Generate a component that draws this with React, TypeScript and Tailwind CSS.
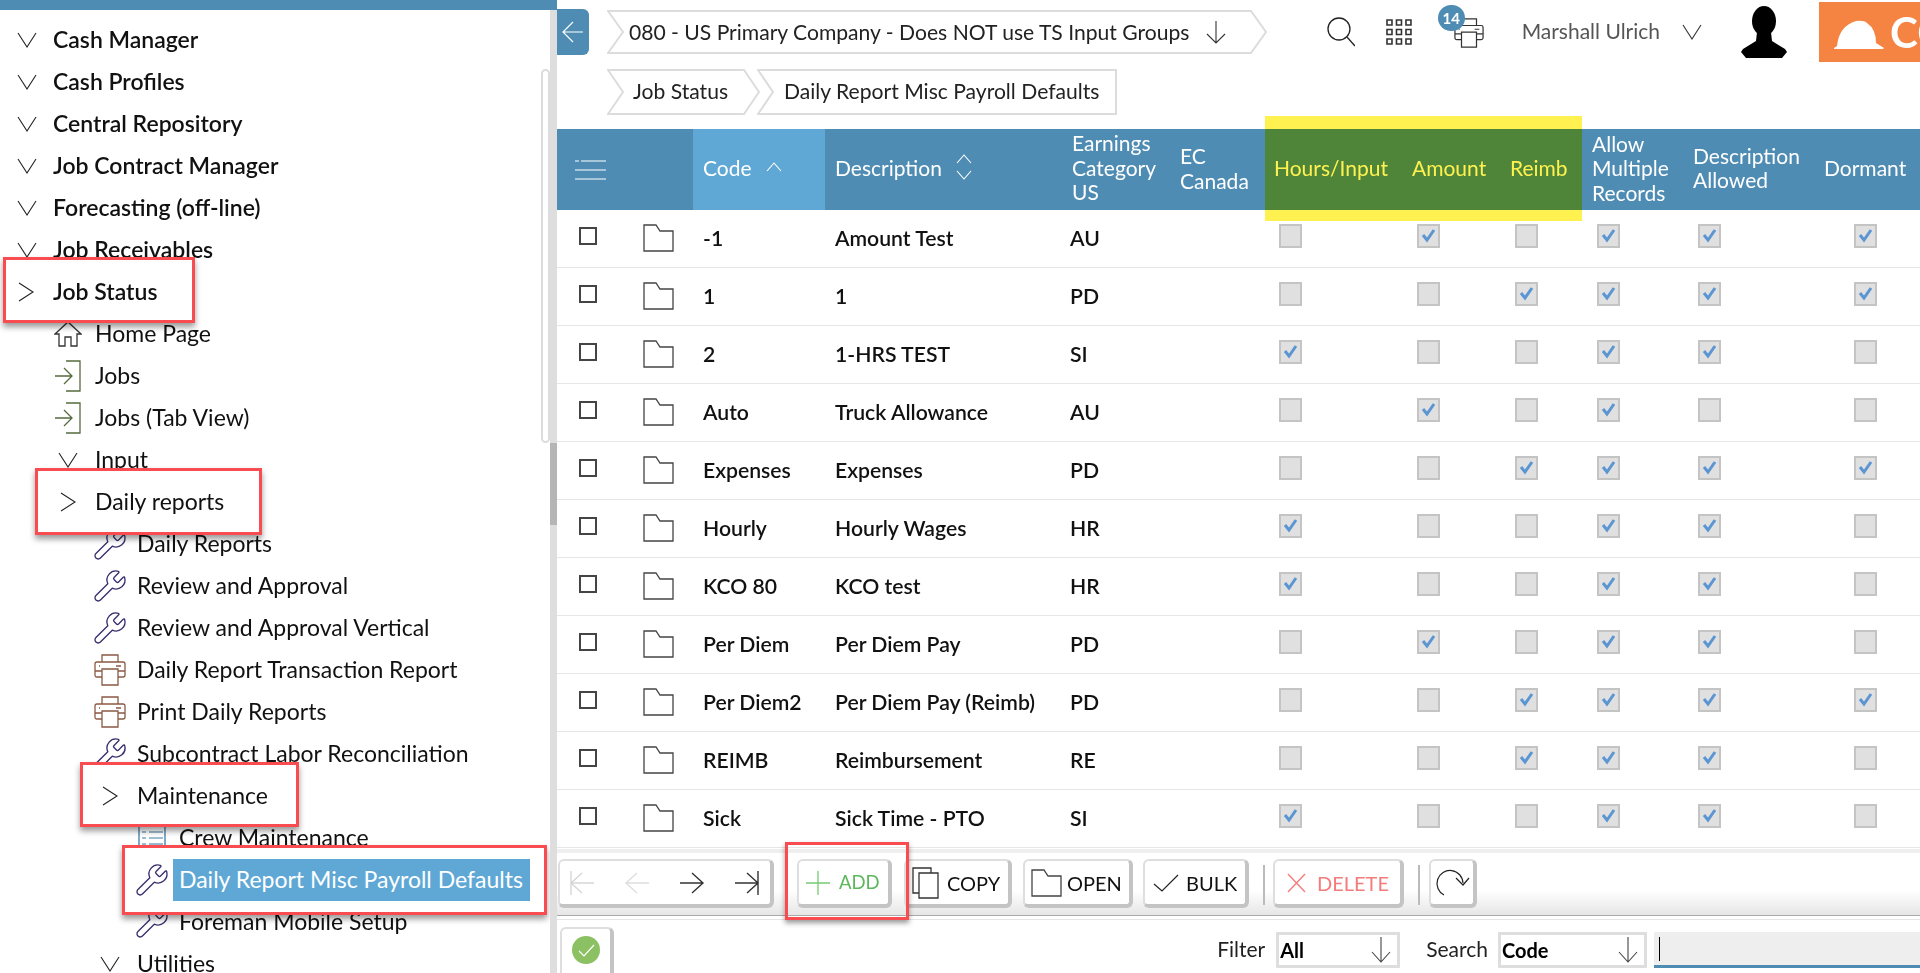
import { ReactNode } from "react";
import { Wrench } from "lucide-react";

const ChevronOpen = ({ className = "" }: { className?: string }) => (
    <svg width="20" height="16" viewBox="0 0 20 16" fill="none" stroke="#222" strokeWidth="1.1" className={className}>
        <path d="M1 1 L10 15 L19 1" />
    </svg>
);

const ChevronClosed = ({ className = "" }: { className?: string }) => (
    <svg width="20" height="20" viewBox="0 0 20 20" fill="none" stroke="#222" strokeWidth="1.1" className={className}>
        <path d="M3 1 L17 10 L3 19" />
    </svg>
);

const HomeIcon = () => (
    <svg width="28" height="26" viewBox="0 0 28 26" fill="none" stroke="#333" strokeWidth="1.3">
        <path d="M1 13 L14 1 L27 13 L23 13 L23 25 L17 25 L17 16 L11 16 L11 25 L5 25 L5 13 Z" />
    </svg>
);

const JobsIcon = () => (
    <svg width="28" height="32" viewBox="0 0 28 32" fill="none" stroke="#566b3f" strokeWidth="1.3">
        <path d="M12 1 H26 V31 H12" />
        <path d="M1 16 H18 M10 8 L18 16 L10 24" />
    </svg>
);

const PrinterIcon = ({ color = "#8a5a44", size = 32 }: { color?: string; size?: number }) => (
    <svg width={size} height={size} viewBox="0 0 32 32" fill="none" stroke={color} strokeWidth="1.3">
        <path d="M8 8 V1 H24 V8" />
        <path d="M8 23 H3 Q1 23 1 21 V10 Q1 8 3 8 H29 Q31 8 31 10 V21 Q31 23 29 23 H24" />
        <path d="M8 15 H24 V31 H8 Z" />
        <path d="M5 12 H6 M22 12 H27" />
        <path d="M1 17 H8 M24 17 H31" />
    </svg>
);

const CrewIcon = () => (
    <svg width="28" height="26" viewBox="0 0 28 26" fill="none" stroke="#3c7ca6" strokeWidth="1.3">
        <path d="M1 1 H27 V25 H1 Z" />
        <path d="M4 7 H8 M11 7 H25 M4 13 H8 M11 13 H25 M4 19 H8 M11 19 H25" strokeWidth="1.1" />
    </svg>
);

const WrenchIcon = () => <Wrench size={36} strokeWidth={0.9} color="#3a2f6e" />;

const FolderIcon = ({ className = "" }: { className?: string }) => (
    <svg width="31" height="28" viewBox="0 0 31 28" fill="white" stroke="#444" strokeWidth="1.3" className={className}>
        <path d="M1 1 H13 L17 7 H30 V27 H1 Z" />
    </svg>
);

const CopyIcon = () => (
    <svg width="27" height="32" viewBox="0 0 27 32" fill="white" stroke="#333" strokeWidth="1.3">
        <path d="M1 1 H19 V26 H1 Z" />
        <path d="M7 6 H26 V31 H7 Z" />
    </svg>
);

const Burger = () => (
    <svg width="31" height="20" viewBox="0 0 31 20" fill="none" stroke="white" strokeWidth="1.2">
        <path d="M0 1 H4 M6 1 H31 M0 10 H31 M0 19 H31" />
    </svg>
);

const Avatar = () => (
    <svg width="46" height="52" viewBox="0 0 46 52" fill="black">
        <ellipse cx="23" cy="15" rx="12" ry="15" />
        <path d="M16 26 H30 L31 35 L44 43 L46 46 L41 52 H5 L0 46 L2 43 L15 35 Z" />
    </svg>
);

const HardHat = () => (
    <svg width="50" height="30" viewBox="0 0 50 30" fill="white">
        <path d="M0 28 L3 26 Q5 6 22 1 Q30 0 33 3 Q42 9 42 23 L50 28 L49 29 H0 Z" />
    </svg>
);

type Row = { label: string; slot: string; pad: string; icon: ReactNode; head?: boolean; box?: string; selected?: boolean };

const open0 = <ChevronOpen className="ml-[1px]" />;
const wrench2 = <WrenchIcon />;

const treeRows: Row[] = [
    { label: "Cash Manager", pad: "pl-[16px]", slot: "w-[37px]", icon: open0, head: true },
    { label: "Cash Profiles", pad: "pl-[16px]", slot: "w-[37px]", icon: open0, head: true },
    { label: "Central Repository", pad: "pl-[16px]", slot: "w-[37px]", icon: open0, head: true },
    { label: "Job Contract Manager", pad: "pl-[16px]", slot: "w-[37px]", icon: open0, head: true },
    { label: "Forecasting (off-line)", pad: "pl-[16px]", slot: "w-[37px]", icon: open0, head: true },
    { label: "Job Receivables", pad: "pl-[16px]", slot: "w-[37px]", icon: open0, head: true },
    {
        label: "Job Status", pad: "pl-[16px]", slot: "w-[37px]", icon: <ChevronClosed />, head: true,
        box: "left-[3px] top-[-14px] w-[192px] h-[66px]",
    },
    { label: "Home Page", pad: "pl-[54px]", slot: "w-[41px]", icon: <HomeIcon /> },
    { label: "Jobs", pad: "pl-[54px]", slot: "w-[41px]", icon: <JobsIcon /> },
    { label: "Jobs (Tab View)", pad: "pl-[54px]", slot: "w-[41px]", icon: <JobsIcon /> },
    { label: "Input", pad: "pl-[54px]", slot: "w-[41px]", icon: <ChevronOpen className="ml-[4px]" /> },
    {
        label: "Daily reports", pad: "pl-[54px]", slot: "w-[41px]", icon: <ChevronClosed className="ml-[4px]" />,
        box: "left-[35px] top-[-13px] w-[227px] h-[67px]",
    },
    { label: "Daily Reports", pad: "pl-[92px]", slot: "w-[45px]", icon: wrench2 },
    { label: "Review and Approval", pad: "pl-[92px]", slot: "w-[45px]", icon: wrench2 },
    { label: "Review and Approval Vertical", pad: "pl-[92px]", slot: "w-[45px]", icon: wrench2 },
    { label: "Daily Report Transaction Report", pad: "pl-[94px]", slot: "w-[43px]", icon: <PrinterIcon /> },
    { label: "Print Daily Reports", pad: "pl-[94px]", slot: "w-[43px]", icon: <PrinterIcon /> },
    { label: "Subcontract Labor Reconciliation", pad: "pl-[92px]", slot: "w-[45px]", icon: wrench2 },
    {
        label: "Maintenance", pad: "pl-[94px]", slot: "w-[43px]", icon: <ChevronClosed className="ml-[6px]" />,
        box: "left-[80px] top-[-13px] w-[219px] h-[65px]",
    },
    { label: "Crew Maintenance", pad: "pl-[138px]", slot: "w-[41px]", icon: <CrewIcon /> },
    {
        label: "Daily Report Misc Payroll Defaults", pad: "pl-[134px]", slot: "w-[45px]", icon: wrench2, selected: true,
        box: "left-[122px] top-[-14px] w-[425px] h-[70px]",
    },
    { label: "Foreman Mobile Setup", pad: "pl-[134px]", slot: "w-[45px]", icon: wrench2 },
    { label: "Utilities", pad: "pl-[94px]", slot: "w-[43px]", icon: <ChevronOpen className="ml-[6px]" /> },
];

const TreeRow = ({ row }: { row: Row }) => (
    <div className={`relative flex h-[42px] shrink-0 items-center text-[23px] text-[#111] ${row.pad} ${row.head ? "font-semibold" : ""}`}>
        {row.box && <div className={`absolute z-10 border-[3px] border-[#f84c50] bg-white shadow-[0_4px_6px_rgba(0,0,0,0.4)] ${row.box}`} />}
        <div className={`flex shrink-0 items-center ${row.slot} ${row.box ? "relative z-20" : ""}`}>{row.icon}</div>
        <span className={`whitespace-nowrap pb-[2px] ${row.box ? "relative z-20" : ""} ${row.selected ? "-ml-[6px] flex h-[42px] w-[357px] items-center bg-[#5fa8d6] px-[6px] text-white" : ""}`}>
            {row.label}
        </span>
    </div>
);

const grid = "grid grid-cols-[68px_68px_132px_238px_108px_94px_135px_100px_82px_101px_132px_103px]";

const tableRows: { code: string; desc: string; cat: string; checks: boolean[] }[] = [
    { code: "-1", desc: "Amount Test", cat: "AU", checks: [false, true, false, true, true, true] },
    { code: "1", desc: "1", cat: "PD", checks: [false, false, true, true, true, true] },
    { code: "2", desc: "1-HRS TEST", cat: "SI", checks: [true, false, false, true, true, false] },
    { code: "Auto", desc: "Truck Allowance", cat: "AU", checks: [false, true, false, true, false, false] },
    { code: "Expenses", desc: "Expenses", cat: "PD", checks: [false, false, true, true, true, true] },
    { code: "Hourly", desc: "Hourly Wages", cat: "HR", checks: [true, false, false, true, true, false] },
    { code: "KCO 80", desc: "KCO test", cat: "HR", checks: [true, false, false, true, true, false] },
    { code: "Per Diem", desc: "Per Diem Pay", cat: "PD", checks: [false, true, false, true, true, false] },
    { code: "Per Diem2", desc: "Per Diem Pay (Reimb)", cat: "PD", checks: [false, false, true, true, true, true] },
    { code: "REIMB", desc: "Reimbursement", cat: "RE", checks: [false, false, true, true, true, false] },
    { code: "Sick", desc: "Sick Time - PTO", cat: "SI", checks: [true, false, false, true, true, false] },
];

const checkPads = ["pl-[14px]", "pl-[17px]", "pl-[15px]", "pl-[15px]", "pl-[15px]", "pl-[39px]"];

const GreyCheck = ({ on }: { on: boolean }) => (
    <div className="mb-[6px] flex h-[24px] w-[23px] items-center justify-center border-2 border-[#c4c4c4] bg-[#e0e0e0]">
        {on && (
            <svg width="15" height="15" viewBox="0 0 15 15" fill="none" stroke="#5b96d2" strokeWidth="3">
                <path d="M2 7 L6 12 L13 2" />
            </svg>
        )}
    </div>
);

const Crumb = ({ w, h, square, children, className = "" }: { w: number; h: number; square?: boolean; children: ReactNode; className?: string }) => (
    <div className={`relative flex items-center ${className}`} style={{ width: w, height: h }}>
        <svg width={w} height={h} className="absolute inset-0" fill="white" stroke="#dcdcdc" strokeWidth="2">
            <path d={square
                ? `M1 1 H${w - 1} V${h - 1} H1 L16 ${h / 2} Z`
                : `M1 1 H${w - 16} L${w - 1} ${h / 2} L${w - 16} ${h - 1} H1 L16 ${h / 2} Z`} />
        </svg>
        <div className="relative flex items-center whitespace-nowrap text-[21.100px] text-[#222]">{children}</div>
    </div>
);

const ToolButton = ({ className, children }: { className: string; children: ReactNode }) => (
    <div className={`flex h-[49px] shrink-0 items-center rounded-md border-2 border-r-4 border-b-4 border-[#dedede] border-r-[#c4c4c4] border-b-[#c4c4c4] bg-white text-[20px] ${className}`}>
        {children}
    </div>
);

const PagerArrow = ({ d, color }: { d: string; color: string }) => (
    <svg width="26" height="30" viewBox="0 0 26 30" fill="none" stroke={color} strokeWidth="1.4">
        <path d={d} />
    </svg>
);

const SelectBox = ({ label, className }: { label: string; className: string }) => (
    <div className={`flex h-[36px] items-center justify-between border-[3px] border-[#dedede] pl-[1px] pr-[6px] text-[20px] font-bold text-black ${className}`}>
        {label}
        <svg width="20" height="28" viewBox="0 0 20 28" fill="none" stroke="#444" strokeWidth="1.1">
            <path d="M10 1 V26 M1 16 L10 26 L19 16" />
        </svg>
    </div>
);

const App = () => {
    return (
        <div className="flex h-[973px] w-[1920px] overflow-hidden bg-white font-['Lato',sans-serif]">
            {/* menu tree */}
            <aside className="relative flex h-full w-[550px] shrink-0 flex-col overflow-hidden">
                <div className="h-[10px] w-full shrink-0 bg-[#4f8cb3]" />
                <div className="flex flex-col pt-[9px]">
                    {treeRows.map(r => <TreeRow key={r.label} row={r} />)}
                </div>
                <div className="absolute left-[541px] top-[69px] h-[374px] w-[9px] rounded-full border-2 border-[#dcdcdc] bg-white" />
            </aside>

            {/* splitter */}
            <div className="flex h-full w-[7px] shrink-0 flex-col bg-[#dedede]">
                <div className="h-[10px] bg-[#4f8cb3]" />
                <div className="mt-[433px] h-[82px] bg-[#b5b5b5]" />
            </div>

            <main className="relative flex h-full min-w-0 flex-1 flex-col">
                {/* top bar */}
                <div className="flex h-[64px] shrink-0 items-center">
                    <div className="flex h-[46px] w-[32px] items-center justify-center rounded-r-md bg-[#4f8cb3] -mt-[1px]">
                        <svg width="22" height="24" viewBox="0 0 22 24" fill="none" stroke="white" strokeWidth="1.2">
                            <path d="M21 12 H1 M11 2 L1 12 L11 22" />
                        </svg>
                    </div>
                    <Crumb w={660} h={44} className="ml-[18px]">
                        <span className="pl-[22px] pb-[1px]">080 - US Primary Company - Does NOT use TS Input Groups</span>
                        <svg width="20" height="24" viewBox="0 0 20 24" fill="none" stroke="#333" strokeWidth="1.1" className="ml-[17px]">
                            <path d="M10 1 V23 M1 14 L10 23 L19 14" />
                        </svg>
                    </Crumb>
                    <svg width="28" height="30" viewBox="0 0 28 30" fill="none" stroke="#222" strokeWidth="1.3" className="ml-[61px]">
                        <circle cx="12" cy="12" r="11" />
                        <path d="M20 20 L28 29" />
                    </svg>
                    <svg width="26" height="26" viewBox="0 0 26 26" fill="none" stroke="#333" strokeWidth="1.6" className="ml-[31px]">
                        <path d="M1 1 H6 V6 H1 Z M10.500 1 H15.500 V6 H10.500 Z M20 1 H25 V6 H20 Z M1 10.500 H6 V15.500 H1 Z M10.500 10.500 H15.500 V15.500 H10.500 Z M20 10.500 H25 V15.500 H20 Z M1 20 H6 V25 H1 Z M10.500 20 H15.500 V25 H10.500 Z M20 20 H25 V25 H20 Z" />
                    </svg>
                    <div className="relative ml-[42px] mt-[2px]">
                        <PrinterIcon color="#333" size={30} />
                        <div className="absolute -left-[16px] -top-[13px] flex h-[26px] w-[27px] items-center justify-center rounded-full bg-[#4f8cb3] text-[15px] font-bold text-white">14</div>
                    </div>
                    <span className="ml-[38px] whitespace-nowrap pb-[2px] text-[21px] text-[#555]">Marshall Ulrich</span>
                    <svg width="20" height="16" viewBox="0 0 20 16" fill="none" stroke="#333" strokeWidth="1.1" className="ml-[22px]">
                        <path d="M1 1 L10 15 L19 1" />
                    </svg>
                    <div className="ml-[39px] -mt-[1px]"><Avatar /></div>
                    <div className="ml-[32px] flex h-[60px] w-[101px] shrink-0 items-center overflow-hidden bg-[#f58442] pl-[15px]">
                        <div className="mt-[6px]"><HardHat /></div>
                        <span className="ml-[6px] text-[42px] font-bold leading-none text-white">CO</span>
                    </div>
                </div>

                {/* crumbs */}
                <div className="mt-[5px] flex h-[46px] shrink-0 pl-[50px]">
                    <Crumb w={153} h={46}><span className="pl-[26px] pb-[3px]">Job Status</span></Crumb>
                    <Crumb w={360} h={46} square className="-ml-[3px]"><span className="pl-[27px] pb-[3px]">Daily Report Misc Payroll Defaults</span></Crumb>
                </div>

                {/* table */}
                <div className="mt-[14px] shrink-0">
                    <div className={`${grid} h-[81px] items-center bg-[#4f8cb3] text-[21px] leading-[24.500px] text-white`}>
                        <div className="col-span-2 flex h-full items-center pl-[18px]"><Burger /></div>
                        <div className="flex h-full items-center bg-[#5fa8d6] pb-[2px] pl-[10px]">
                            Code
                            <svg width="16" height="10" viewBox="0 0 16 10" fill="none" stroke="white" strokeWidth="1.1" className="ml-[14px] -mt-[3px]">
                                <path d="M1 9 L8 1 L15 9" />
                            </svg>
                        </div>
                        <div className="flex items-center pb-[2px] pl-[10px]">
                            Description
                            <svg width="16" height="26" viewBox="0 0 16 26" fill="none" stroke="white" strokeWidth="1.1" className="ml-[14px] -mt-[3px]">
                                <path d="M1 9 L8 1 L15 9 M1 17 L8 25 L15 17" />
                            </svg>
                        </div>
                        <div className="pb-[3px] pl-[9px]">Earnings<br />Category<br />US</div>
                        <div className="pb-[2px] pl-[9px]">EC<br />Canada</div>
                        <div className="pb-[2px] pl-[9px]">Hours/Input</div>
                        <div className="pb-[2px] pl-[12px]">Amount</div>
                        <div className="pb-[2px] pl-[10px]">Reimb</div>
                        <div className="pb-[2px] pl-[10px]">Allow<br />Multiple<br />Records</div>
                        <div className="pb-[3px] pl-[10px]">Description<br />Allowed</div>
                        <div className="pb-[2px] pl-[9px]">Dormant</div>
                    </div>
                    {tableRows.map(r => (
                        <div key={r.code} className={`${grid} h-[58px] items-center border-b border-[#e6e6e6] text-[21.200px] font-semibold text-[#111]`}>
                            <div className="pl-[22px]">
                                <div className="mb-[6px] h-[18px] w-[18px] border-2 border-[#444] bg-white" />
                            </div>
                            <div className="pl-[18px]"><FolderIcon className="mb-[2px]" /></div>
                            <div className="pl-[10px]">{r.code}</div>
                            <div className="whitespace-nowrap pl-[10px]">{r.desc}</div>
                            <div className="pl-[7px]">{r.cat}</div>
                            <div />
                            {r.checks.map((c, i) => (
                                <div key={i} className={checkPads[i]}><GreyCheck on={c} /></div>
                            ))}
                        </div>
                    ))}
                </div>

                {/* toolbar */}
                <div className="mt-[1px] flex h-[67px] shrink-0 items-start border-t-4 border-b border-t-[#efefef] border-b-[#aaaaaa] bg-gradient-to-b from-white from-60% to-[#e6e6e6] pt-[6px] pl-[1px]">
                    <ToolButton className="w-[216px] gap-[29px] pl-[9px] [&_svg]:shrink-0">
                        <PagerArrow color="#d6d6d6" d="M2 3 V27 M25 15 H2 M13 5 L2 15 L13 25" />
                        <PagerArrow color="#dedede" d="M25 15 H2 M13 5 L2 15 L13 25" />
                        <PagerArrow color="#333" d="M1 15 H24 M13 5 L24 15 L13 25" />
                        <PagerArrow color="#333" d="M1 15 H24 M13 5 L24 15 L13 25 M24 3 V27" />
                    </ToolButton>
                    <ToolButton className="ml-[23px] w-[95px] pl-[7px] text-[#5cb85c]">
                        <svg width="24" height="26" viewBox="0 0 24 26" fill="none" stroke="#76cc76" strokeWidth="1.3" className="shrink-0">
                            <path d="M12 1 V25 M0 13 H24" />
                        </svg>
                        <span className="ml-[9px] text-[18.500px]">ADD</span>
                    </ToolButton>
                    <ToolButton className="ml-[12px] w-[108px] pl-[6px] text-[#111]">
                        <CopyIcon />
                        <span className="ml-[8px]">COPY</span>
                    </ToolButton>
                    <ToolButton className="ml-[11px] w-[110px] pl-[6px] text-[#111]">
                        <FolderIcon />
                        <span className="ml-[5px]">OPEN</span>
                    </ToolButton>
                    <ToolButton className="ml-[10px] w-[106px] pl-[8px] text-[#111]">
                        <svg width="26" height="18" viewBox="0 0 26 18" fill="none" stroke="#222" strokeWidth="1.2" className="shrink-0">
                            <path d="M1 10 L9 17 L25 1" />
                        </svg>
                        <span className="ml-[7px]">BULK</span>
                    </ToolButton>
                    <div className="ml-[14px] mt-[6px] h-[40px] w-[2px] bg-[#bbbbbb]" />
                    <ToolButton className="ml-[8px] w-[131px] pl-[12px] text-[#f47c7c]">
                        <svg width="19" height="20" viewBox="0 0 19 20" fill="none" stroke="#f47c7c" strokeWidth="1.4" className="shrink-0">
                            <path d="M1 1 L18 19 M18 1 L1 19" />
                        </svg>
                        <span className="ml-[11px]">DELETE</span>
                    </ToolButton>
                    <div className="ml-[14px] mt-[6px] h-[40px] w-[2px] bg-[#bbbbbb]" />
                    <ToolButton className="ml-[9px] w-[48px] justify-center">
                        <svg width="36" height="36" viewBox="0 0 36 36" fill="none" stroke="#222" strokeWidth="1.2">
                            <path d="M10 30 A13 13 0 1 1 29 18 M22 13 L29 20 L35 13" />
                        </svg>
                    </ToolButton>
                </div>

                {/* filter row */}
                <div className="mt-[3px] flex min-h-0 flex-1 items-start border-t border-[#e6e6e6]">
                    <div className="ml-[3px] mt-[7px] flex h-[54px] w-[54px] shrink-0 items-center justify-center rounded-md border-2 border-r-4 border-[#dedede] border-r-[#c4c4c4] bg-white pb-[8px]">
                        <div className="flex h-[28px] w-[28px] items-center justify-center rounded-full bg-[#8cc163]">
                            <svg width="17" height="13" viewBox="0 0 17 13" fill="none" stroke="white" strokeWidth="1.2">
                                <path d="M1 7 L6 12 L16 1" />
                            </svg>
                        </div>
                    </div>
                    <div className="ml-auto mt-[12px] flex items-center text-[21px] text-[#222]">
                        <span className="pb-[2px]">Filter</span>
                        <SelectBox label="All" className="ml-[11px] w-[124px]" />
                        <span className="ml-[26px] pb-[2px]">Search</span>
                        <SelectBox label="Code" className="ml-[10px] w-[149px]" />
                        <div className="ml-[7px] flex h-[36px] w-[266px] items-center border-b-[3px] border-[#4f8cb3] bg-[#eeeeee] pl-[5px]">
                            <div className="h-[24px] w-[1px] bg-black" />
                        </div>
                    </div>
                </div>

                {/* yellow highlight laid over the three columns */}
                <div className="absolute left-[708px] top-[116px] h-[105px] w-[317px] bg-[#fff250] mix-blend-multiply" />
                {/* red box around ADD */}
                <div className="absolute left-[228px] top-[842px] h-[78px] w-[124px] border-[3px] border-[#f84c50] shadow-[0_3px_5px_rgba(0,0,0,0.4)]" />
            </main>
        </div>
    );
};

export default App;
